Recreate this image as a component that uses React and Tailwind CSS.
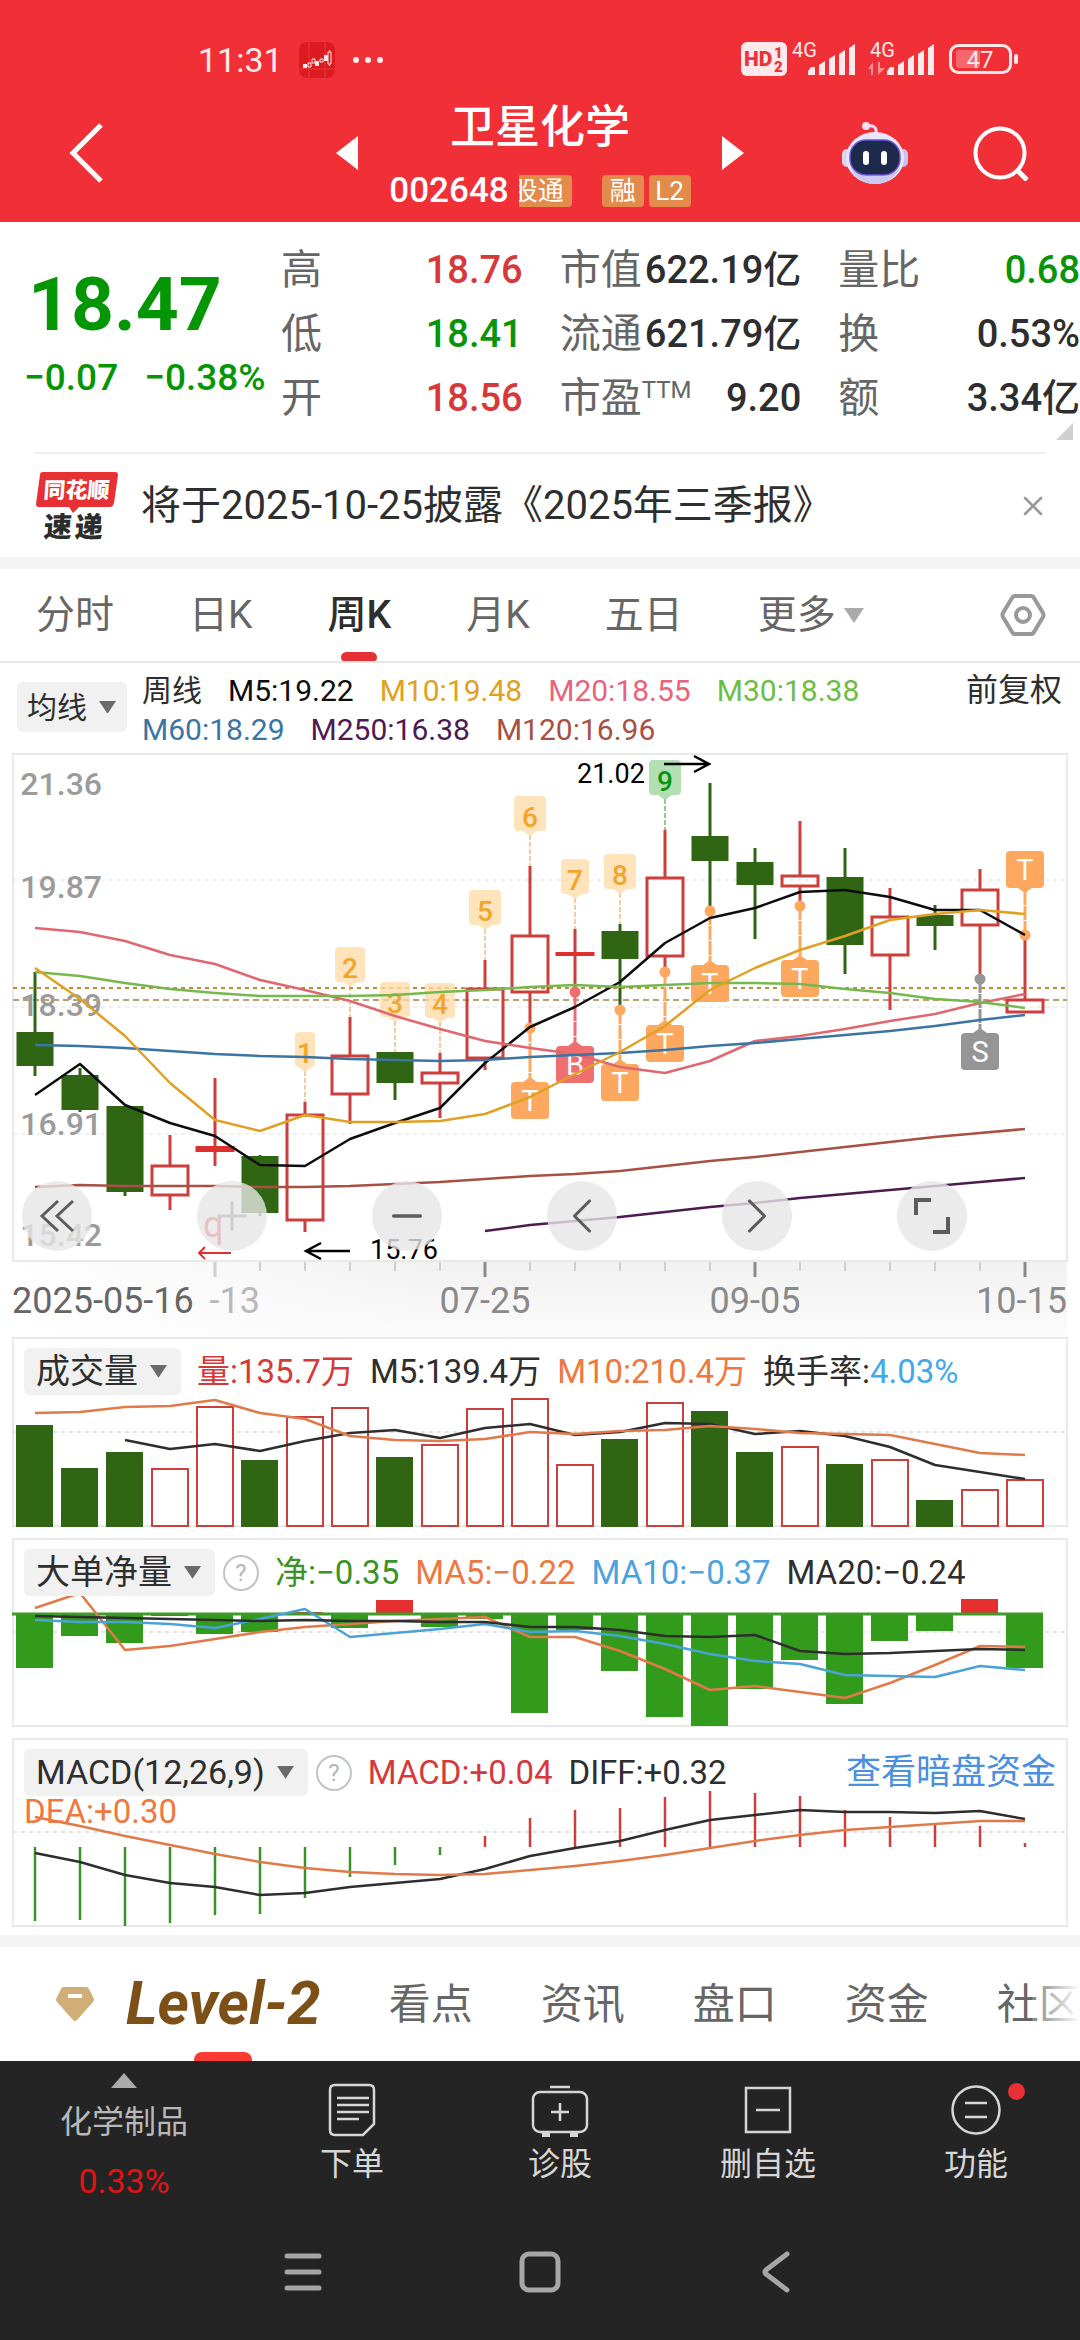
import { ChevronLeft, ChevronRight, ChevronsLeft, Minus, Plus, X } from "lucide-react";

const RED = "#cc3f3d";
const GREEN = "#306613";
const STEP = 45;
const FIRST = 35;
const xOf = (i) => FIRST + i * STEP;

// [kind, high, body top, body bottom, low]
const candles = [
    ["g", 232, 292, 326, 336],
    ["g", 328, 335, 370, 372],
    ["g", 366, 366, 452, 456],
    ["r", 395, 426, 455, 470],
    ["x", 338, 406, 412, 426],
    ["g", 415, 416, 473, 476],
    ["r", 362, 375, 480, 492],
    ["r", 277, 316, 354, 384],
    ["g", 312, 312, 343, 360],
    ["r", 313, 333, 343, 378],
    ["r", 220, 249, 318, 330],
    ["r", 126, 196, 252, 284],
    ["x", 189, 212, 216, 250],
    ["g", 184, 191, 219, 270],
    ["r", 90, 138, 216, 232],
    ["g", 43, 96, 121, 170],
    ["g", 108, 122, 145, 199],
    ["r", 81, 136, 146, 166],
    ["g", 108, 137, 205, 234],
    ["r", 148, 177, 215, 270],
    ["g", 165, 175, 186, 210],
    ["r", 129, 150, 185, 239],
    ["r", 196, 260, 272, 272],
];

const priceLines = [
    { color: "#0d0d0d", from: 0, ys: [355, 324, 365, 383, 396, 425, 426, 399, 383, 368, 323, 287, 267, 242, 203, 178, 168, 152, 150, 157, 170, 170, 195] },
    { color: "#e0666f", from: 0, ys: [188, 192, 201, 215, 224, 240, 250, 261, 276, 289, 301, 308, 314, 327, 333, 321, 301, 296, 289, 281, 274, 263, 254] },
    { color: "#76b84c", from: 0, ys: [232, 236, 243, 249, 253, 256, 256, 256, 255, 252, 250, 247, 245, 247, 245, 243, 243, 244, 249, 253, 259, 262, 268] },
    { color: "#3a75a3", from: 0, ys: [305, 306, 308, 311, 314, 316, 317, 319, 320, 321, 320, 317, 315, 313, 310, 306, 303, 299, 295, 291, 286, 280, 275] },
    { color: "#a85044", from: 0, ys: [447, 445, 446, 446, 446, 447, 447, 446, 444, 442, 439, 436, 434, 431, 426, 421, 417, 412, 407, 402, 397, 393, 389] },
    { color: "#4d1a52", from: 10, ys: [491, 485, 481, 477, 472, 467, 463, 458, 454, 450, 446, 442, 438] },
    { color: "#e0a021", from: 0, ys: [228, 259, 296, 343, 380, 391, 375, 382, 382, 381, 374, 357, 334, 312, 286, 250, 228, 210, 196, 180, 174, 170, 174] },
];

// nine-turn counters: [index, label, top, width]
const counters = [
    [6, "1", 292, 20],
    [7, "2", 207, 30],
    [8, "3", 242, 30],
    [9, "4", 243, 30],
    [10, "5", 150, 32],
    [11, "6", 56, 32],
    [12, "7", 119, 28],
    [13, "8", 114, 32],
    [14, "9", 20, 32],
];

// trade marks: [index, letter, box top, dot y, color]
const trades = [
    [11, "T", 342, 288, "#fea75f"],
    [12, "B", 306, 252, "#ef6e6e"],
    [13, "T", 324, 270, "#fea75f"],
    [14, "T", 285, 232, "#fea75f"],
    [15, "T", 225, 171, "#fea75f"],
    [17, "T", 220, 166, "#fea75f"],
    [21, "S", 293, 239, "#959595"],
    [22, "T", 111, 195, "#fea75f"],
];

const volumes = [
    ["g", 105], ["g", 148], ["g", 132], ["r", 149], ["r", 87], ["g", 140], ["r", 97], ["r", 88],
    ["g", 137], ["r", 125], ["r", 89], ["r", 79], ["r", 145], ["g", 119], ["r", 83], ["g", 91],
    ["g", 132], ["r", 127], ["g", 144], ["r", 140], ["g", 180], ["r", 170], ["r", 160],
];
const volumeLines = [
    { color: "#2e2e2e", from: 2, ys: [120, 129, 124, 131, 121, 113, 110, 118, 108, 104, 115, 112, 103, 104, 114, 111, 116, 127, 145, 152, 159] },
    { color: "#e07a4a", from: 0, ys: [93, 92, 87, 86, 80, 93, 99, 116, 120, 121, 119, 112, 114, 111, 110, 106, 109, 113, 114, 115, 124, 133, 135] },
];

const netBars = [138, 106, 113, 86, 104, 102, 82, 98, 70, 97, 89, 183, 100, 141, 187, 196, 159, 130, 174, 111, 101, 69, 138];
const netLines = [
    { color: "#e07a4a", from: 0, ys: [78, 63, 120, 116, 109, 102, 97, 94, 91, 89, 87, 107, 107, 121, 139, 160, 156, 162, 168, 153, 135, 116, 117] },
    { color: "#4aa3d6", from: 0, ys: [90, 92, 92, 94, 98, 89, 79, 107, 103, 99, 94, 102, 101, 106, 114, 124, 131, 134, 145, 146, 147, 136, 140] },
    { color: "#2e2e2e", from: 0, ys: [86, 87, 88, 89, 90, 91, 90, 91, 91, 92, 92, 97, 97, 100, 106, 107, 105, 121, 124, 123, 121, 119, 120] },
];

const macdBars = [191, 190, 196, 193, 185, 184, 168, 147, 135, 125, 106, 88, 80, 78, 67, 61, 63, 66, 80, 87, 95, 96, 113];
const macdLines = [
    { color: "#2e2e2e", from: 0, ys: [123, 132, 145, 153, 157, 165, 163, 157, 153, 149, 139, 126, 118, 111, 100, 90, 85, 80, 82, 82, 83, 81, 89] },
    { color: "#e07a4a", from: 0, ys: [87, 96, 106, 115, 124, 132, 138, 142, 144, 145, 144, 140, 136, 131, 125, 118, 111, 105, 100, 97, 94, 91, 91] },
];

const Lines = ({ lines, width = 2.5 }) =>
    lines.map((line) => (
        <polyline
            key={line.color}
            fill="none"
            stroke={line.color}
            strokeWidth={width}
            strokeLinejoin="round"
            points={line.ys.map((y, i) => `${xOf(i + line.from)},${y}`).join(" ")}
        />
    ));

const Candle = ({ i, kind, high, top, bottom, low }) => {
    const x = xOf(i);
    if (kind === "g")
        return (
            <g fill={GREEN}>
                <rect x={x - 1.5} y={high} width="3" height={low - high} />
                <rect x={x - 18.5} y={top} width="37" height={bottom - top} />
            </g>
        );
    if (kind === "x")
        return (
            <g fill={RED}>
                <rect x={x - 1.5} y={high} width="3" height={low - high} />
                <rect x={x - 19.5} y={top} width="39" height={bottom - top} fill="#df3030" />
            </g>
        );
    return (
        <g stroke={RED} strokeWidth="3" fill="none">
            <path d={`M${x} ${high}V${top}M${x} ${bottom}V${low}`} />
            <rect x={x - 18} y={top} width="36" height={bottom - top} />
        </g>
    );
};

const Counter = ({ i, label, top, width }) => {
    const x = xOf(i);
    const last = label === "9";
    const color = last ? "#0f930f" : "#f0a52c";
    return (
        <g>
            <path d={`M${x} ${top + 39}V${candles[i][1]}`} stroke={last ? "#2c8a2c" : "#d6a243"} strokeDasharray="5 2" />
            <g fill={last ? "#98d69a" : "#fdd9a4"} fillOpacity="0.75">
                <rect x={x - width / 2} y={top} width={width} height="35" rx="4" />
                <path d={`M${x - 7} ${top + 35}h14l-7 5z`} />
            </g>
            <text x={x} y={top + 31} textAnchor="middle" fontSize="28" fontWeight="500" fill={color}>{label}</text>
        </g>
    );
};

const Trade = ({ i, letter, top, dot, color }) => {
    const x = xOf(i);
    const above = top < dot;
    return (
        <g>
            <path d={`M${x} ${dot}V${above ? top + 40 : top - 4}`} stroke={color} strokeWidth="3" strokeDasharray="14 1" />
            <circle cx={x} cy={dot} r="5.5" fill={color} />
            <rect x={x - 19} y={top} width="38" height="37" rx="4" fill={color} />
            <path d={above ? `M${x - 7} ${top + 37}h14l-7 5z` : `M${x - 7} ${top}h14l-7-5z`} fill={color} />
            <text x={x} y={top + 29} textAnchor="middle" fontSize="29" fill="#fff">{letter}</text>
        </g>
    );
};

const PriceChart = () => (
    <svg viewBox="0 13 1080 584" className="block w-full">
        <defs>
            <linearGradient id="fadeRight" x1="0" x2="1" y1="0" y2="0">
                <stop offset="0" stopColor="#fff" />
                <stop offset="0.4" stopColor="#fff" stopOpacity="0" />
            </linearGradient>
            <linearGradient id="fadeDown" x1="0" x2="0" y1="0" y2="1">
                <stop offset="0" stopColor="#f1f1f1" />
                <stop offset="1" stopColor="#fbfbfb" />
            </linearGradient>
        </defs>
        <rect x="13" y="521" width="1054" height="76" fill="url(#fadeDown)" />
        <rect x="13" y="521" width="1054" height="76" fill="url(#fadeRight)" />
        <rect x="13" y="14" width="1054" height="507" fill="none" stroke="#e9e9e9" strokeWidth="2" />
        {[140, 267, 394].map((y) => (
            <path key={y} d={`M13 ${y}H1067`} stroke="#e2e2e2" strokeDasharray="4 4" />
        ))}
        <g fontSize="32" fontWeight="500" fill="#9b9b9b" textAnchor="end">
            <text x="102" y="55">21.36</text>
            <text x="102" y="158">19.87</text>
            <text x="102" y="276">18.39</text>
            <text x="102" y="395">16.91</text>
            <text x="102" y="506">15.42</text>
        </g>
        <path d="M13 248H1067" stroke="#c08c3c" strokeWidth="2" strokeDasharray="4 4" />
        <path d="M13 260H1067" stroke="#b8a070" strokeWidth="2" strokeDasharray="6 4" />
        {candles.map(([kind, high, top, bottom, low], i) => (
            <Candle key={i} i={i} kind={kind} high={high} top={top} bottom={bottom} low={low} />
        ))}
        {counters.map(([i, label, top, width]) => (
            <Counter key={i} i={i} label={label} top={top} width={width} />
        ))}
        {trades.map(([i, letter, top, dot, color]) => (
            <Trade key={i} i={i} letter={letter} top={top} dot={dot} color={color} />
        ))}
        <Lines lines={priceLines} />
        <g stroke="#000" strokeWidth="2.5" fill="none">
            <path d="M664 24H709M694 16l15 8-15 8" />
            <path d="M350 511H306M321 503l-15 8 15 8" />
        </g>
        <text x="577" y="43" fontSize="27" fill="#000">21.02</text>
        <text x="370" y="519" fontSize="27" fill="#000">15.76</text>
        <path d="M231 513H199M205 507l-6 6 6 6" stroke="#df3030" strokeWidth="2" fill="none" />
        <text x="203" y="497" fontSize="36" fill="#df3030">q</text>
        {Array.from({ length: 19 }, (_, k) => k + 4).map((i) => {
            const major = i % 6 === 4;
            return (
                <path
                    key={i}
                    d={`M${xOf(i)} 522V${major ? 537 : 531}`}
                    stroke={major && i > 4 ? "#8a8a8a" : "#cfcfcf"}
                    strokeWidth={major ? 3 : 2}
                />
            );
        })}
        <g fontSize="36" fill="#8a8a8a">
            <text x="260" y="573" textAnchor="end" fill="#b8b8b8">-13</text>
            <text x="12" y="573" fill="#666">2025-05-16</text>
            <text x="485" y="573" textAnchor="middle">07-25</text>
            <text x="755" y="573" textAnchor="middle">09-05</text>
            <text x="1067" y="573" textAnchor="end">10-15</text>
        </g>
    </svg>
);

const Frame = ({ viewBox, bottom, grid, top, children }) => (
    <svg viewBox={viewBox} className="block w-full">
        <rect x="13" y={top} width="1054" height={bottom - top} fill="none" stroke="#e9e9e9" strokeWidth="2" />
        <path d={`M13 ${grid}H1067`} stroke="#e4e4e4" strokeWidth="2" strokeDasharray="4 4" />
        {children}
    </svg>
);

const VolumeChart = () => (
    <Frame viewBox="0 17 1080 201" top={18} bottom={206} grid={112}>
        {volumes.map(([kind, y], i) =>
            kind === "g" ? (
                <rect key={i} x={xOf(i) - 19} y={y} width="37" height={207 - y} fill={GREEN} />
            ) : (
                <rect key={i} x={xOf(i) - 18} y={y} width="36" height={206 - y} fill="#fff" stroke={RED} strokeWidth="2" />
            )
        )}
        <Lines lines={volumeLines} />
    </Frame>
);

const NetChart = () => (
    <Frame viewBox="0 8 1080 200" top={9} bottom={196} grid={102}>
        {netBars.map((y, i) => (
            <rect
                key={i}
                x={xOf(i) - 19}
                y={Math.min(y, 84)}
                width="37"
                height={Math.abs(y - 84)}
                fill={y < 84 ? "#e63030" : "#329b1c"}
            />
        ))}
        <path d="M12 84H1043" stroke="#3d9c28" strokeWidth="3" />
        <Lines lines={netLines} />
    </Frame>
);

const MacdChart = () => (
    <Frame viewBox="0 8 1080 197" top={9} bottom={196} grid={102}>
        {macdBars.map((y, i) => (
            <path key={i} d={`M${xOf(i)} 117V${y}`} stroke={y > 117 && i < 11 ? "#3b9328" : i < 10 ? "#3b9328" : "#cc3f3d"} strokeWidth="2.5" />
        ))}
        <Lines lines={macdLines} />
    </Frame>
);

const Down = ({ className }) => (
    <svg viewBox="0 0 16 12" className={className} fill="currentColor">
        <path d="M0 0h16L8 12z" />
    </svg>
);

const Pill = ({ children }) => (
    <button className="flex h-[47px] shrink-0 items-center gap-3 rounded-md bg-[#f1f1f1] pr-3.5 pl-3 text-[34px] text-[#2e2e2e]">
        {children}
        <Down className="w-[17px] text-[#6a6a6a]" />
    </button>
);

const Help = () => (
    <button aria-label="说明" className="flex size-[36px] shrink-0 items-center justify-center rounded-full border-2 border-[#c3c3c3] text-2xl text-[#b5b5b5]">
        ?
    </button>
);

const StatusBar = () => (
    <div className="flex h-12 items-center justify-between pr-[58px] pl-[198px] text-[#ffe9ea]">
        <div className="flex items-center">
            <span className="text-[34px]">11:31</span>
            <svg viewBox="0 0 36 36" className="ml-[16px] size-9">
                <rect width="36" height="36" rx="8" fill="#dd1a1f" />
                <path d="M10 0v36M26 0v36M0 27h36" stroke="#ec4a4c" strokeWidth="0.6" />
                <g fill="#ffe9ea">
                    <path d="M4 22h4v4H4zM16 19h4v5h-4zM25 13h4v6h-4z" />
                </g>
                <g fill="none" stroke="#ffe9ea" strokeWidth="1">
                    <path d="M9 21h3v4H9zM13 17h3v4h-3zM21 17h3v3h-3zM29 10h3v12h-3zM30.500 8v2M30.500 22v2" />
                </g>
            </svg>
            <svg viewBox="0 0 32 8" className="ml-[17px] w-8" fill="currentColor">
                <circle cx="4" cy="4" r="3" />
                <circle cx="16" cy="4" r="3" />
                <circle cx="28" cy="4" r="3" />
            </svg>
        </div>
        <svg viewBox="741 36 281 48" className="w-[281px]" fill="currentColor">
            <rect x="741" y="42" width="46" height="34" rx="6" />
            <text x="744" y="66" fontSize="21" fontWeight="900" fill="#e8343c">HD</text>
            <text x="774" y="58" fontSize="15" fontWeight="900" fill="#e8343c">1</text>
            <text x="774" y="72" fontSize="15" fontWeight="900" fill="#e8343c">2</text>
            <text x="792" y="57" fontSize="20">4G</text>
            <text x="870" y="57" fontSize="20">4G</text>
            {[808, 887].map((x) => (
                <path
                    key={x}
                    d={`M${x} 75v-4l3-4h4v8zM${x + 11} 75v-10l6-4v14zM${x + 21} 75v-16l6-4v20zM${x + 31} 75v-21l6-4v25zM${x + 41} 75v-27l6-4v31z`}
                />
            ))}
            <path d="M868 69l5-7v13h-2v-6zM878 75V62h2v6h5z" opacity="0.5" />
            <rect x="950.500" y="45.500" width="60" height="27" rx="8" fill="none" stroke="currentColor" strokeWidth="3" />
            <rect x="956" y="50" width="24" height="18" rx="3" opacity="0.3" />
            <text x="980" y="68" fontSize="24" textAnchor="middle">47</text>
            <rect x="1014" y="54" width="4" height="10" rx="2" />
        </svg>
    </div>
);

const Robot = () => (
    <svg viewBox="0 0 66 62" className="w-[66px]">
        <path d="M34 11c1-6-3-8-9-7" fill="none" stroke="#eadcf5" strokeWidth="3" />
        <circle cx="24" cy="4" r="4" fill="#f3dff0" />
        <rect x="0" y="27" width="10" height="18" rx="5" fill="#d9d3f4" />
        <rect x="56" y="27" width="10" height="18" rx="5" fill="#c7c3ee" />
        <ellipse cx="33" cy="36" rx="29" ry="26" fill="#ebe7fb" />
        <path d="M8 46c5 10 14 16 25 16s20-6 25-16c-7 7-14 8-25 8s-18-1-25-8z" fill="#cdc8f2" />
        <rect x="8" y="18" width="50" height="35" rx="16" fill="#1d2a4c" stroke="#6c55d8" strokeWidth="1.500" />
        <rect x="21" y="29" width="6" height="14" rx="3" fill="#fff" />
        <rect x="39" y="29" width="6" height="14" rx="3" fill="#fff" />
    </svg>
);

const Header = () => (
    <header className="bg-[#f12f37] pt-9 text-white">
        <StatusBar />
        <div className="grid h-[138px] grid-cols-[1fr_408px_1fr] items-center">
            <div className="pl-[68px]">
                <button aria-label="返回" className="block">
                    <svg viewBox="0 0 36 60" className="h-[60px]" fill="none" stroke="currentColor" strokeWidth="5">
                        <path d="M33 2L5 30l28 28" />
                    </svg>
                </button>
            </div>
            <div className="flex items-center justify-between">
                <button aria-label="上一只">
                    <svg viewBox="0 0 22 34" className="w-[22px]" fill="currentColor"><path d="M22 0v34L0 17z" /></svg>
                </button>
                <div className="flex flex-col items-center pt-3">
                    <h1 className="text-[45px] leading-[64px] font-medium">卫星化学</h1>
                    <div className="flex items-center leading-[62px]">
                        <span className="text-[35px] font-medium">002648</span>
                        <span className="ml-[10px] flex h-8 w-[53px] items-center justify-end overflow-hidden rounded-r-sm bg-[#e38b4a] pr-2 text-[26px] whitespace-nowrap">股通</span>
                        <span className="ml-[30px] flex h-8 w-[42px] items-center justify-center rounded-sm bg-[#e38b4a] text-[26px]">融</span>
                        <span className="ml-[5px] flex h-8 w-[42px] items-center justify-center rounded-sm bg-[#e38b4a] text-[26px]">L2</span>
                    </div>
                </div>
                <button aria-label="下一只">
                    <svg viewBox="0 0 22 34" className="w-[22px]" fill="currentColor"><path d="M0 0v34l22-17z" /></svg>
                </button>
            </div>
            <div className="flex items-center justify-end gap-[65px] pr-[51px]">
                <button aria-label="智能助手"><Robot /></button>
                <button aria-label="搜索">
                    <svg viewBox="0 0 56 56" className="w-[56px]" fill="none" stroke="currentColor" strokeWidth="4">
                        <circle cx="27" cy="28" r="24.500" />
                        <path d="M44 45l10 10" strokeWidth="5" />
                    </svg>
                </button>
            </div>
        </div>
    </header>
);

const Quote = ({ rows }) => (
    <dl className="text-[38px] leading-[64px] whitespace-nowrap">
        {rows.map(([label, value, color, sup]) => (
            <div key={label} className="flex items-center justify-between">
                <dt className="flex text-[41px] text-[#666]">
                    {label}
                    {sup && <sup className="top-[-8px] text-[24px] leading-[64px]">{sup}</sup>}
                </dt>
                <dd className={`font-medium ${color}`}>{value}</dd>
            </div>
        ))}
    </dl>
);

const up = "text-[#d63939]";
const down = "text-[#089408]";
const flat = "text-[#2e2e2e]";

const Summary = () => (
    <section className="relative grid grid-cols-[220px_1fr_1fr_1fr] gap-x-[37px] pt-4 pb-[22px] pl-6">
        <div className="pt-[17px] whitespace-nowrap text-[#059605]">
            <p className="pl-1 text-[75px] leading-[98px] font-bold">18.47</p>
            <p className="flex gap-[26px] text-[37px] leading-[50px] font-medium">
                <span>−0.07</span>
                <span>−0.38%</span>
            </p>
        </div>
        <Quote rows={[["高", "18.76", up], ["低", "18.41", down], ["开", "18.56", up]]} />
        <Quote rows={[["市值", "622.19亿", flat], ["流通", "621.79亿", flat], ["市盈", "9.20", flat, "TTM"]]} />
        <Quote rows={[["量比", "0.68", down], ["换", "0.53%", flat], ["额", "3.34亿", flat]]} />
        <svg viewBox="0 0 17 17" className="absolute right-[7px] bottom-3 w-[17px]" fill="#cfcfcf"><path d="M17 0v17H0z" /></svg>
    </section>
);

const Notice = () => (
    <section className="mx-[35px] flex h-[105px] items-center border-t-2 border-[#eee]">
        <svg viewBox="0 0 84 72" className="w-[84px] shrink-0">
            <path d="M8 2h72q3 0 3 3l-4 28q-1 4-4 4H44l-6 6-4-6H4q-3 0-3-3L5 5q0-3 3-3z" fill="#e63034" />
            <text x="10" y="28" fontSize="22" fontWeight="900" fill="#fff" transform="skewX(-4)">同花顺</text>
            <text x="13" y="67" fontSize="28" fontWeight="900" fill="#2c2c2c" transform="skewX(-4)">速</text>
            <text x="44" y="67" fontSize="28" fontWeight="900" fill="#2c2c2c" transform="skewX(-4)">递</text>
        </svg>
        <a href="#notice" className="ml-[22px] flex-1 text-[40px] whitespace-nowrap text-[#2e2e2e]">将于2025-10-25披露《2025年三季报》</a>
        <button aria-label="关闭" className="text-[#999]"><X size={32} strokeWidth={2} className="-mr-1" /></button>
    </section>
);

const periods = ["分时", "日K", "周K", "月K", "五日"];

const PeriodTabs = () => (
    <nav className="flex h-[94px] items-stretch gap-[75px] border-b-2 border-[#e6e6e6] pr-[34px] pl-9 text-[39px] text-[#666]">
        {periods.map((name) => (
            <button key={name} className={`relative whitespace-nowrap ${name === "周K" ? "font-medium text-[#2e2e2e]" : ""}`}>
                {name}
                {name === "周K" && <span className="absolute bottom-0 left-1/2 h-[9px] w-9 -translate-x-1/2 rounded-t-md rounded-b-sm bg-[#e63034]" />}
            </button>
        ))}
        <button className="flex items-center gap-2 whitespace-nowrap">
            更多
            <Down className="w-5 text-[#aaa]" />
        </button>
        <button aria-label="设置" className="ml-auto text-[#999]">
            <svg viewBox="0 0 46 46" className="w-[46px]" fill="none" stroke="currentColor" strokeWidth="4">
                <path d="M15 4h16q2 0 3 2l9 15q1 2 0 4l-9 15q-1 2-3 2H15q-2 0-3-2L3 25q-1-2 0-4l9-15q1-2 3-2z" />
                <circle cx="23" cy="23" r="7" />
            </svg>
        </button>
    </nav>
);

const AverageBar = () => (
    <div className="flex h-[90px] items-start pr-[18px] pl-[17px] text-[30px] leading-[39px] whitespace-nowrap">
        <button className="mt-[19px] flex h-[50px] w-[110px] items-center gap-3 rounded-md bg-[#f1f1f1] pl-[10px] text-[#2e2e2e]">
            均线
            <Down className="w-[17px] text-[#6a6a6a]" />
        </button>
        <div className="mt-2 ml-[15px] flex-1">
            <p className="flex gap-[26px]">
                <span className="text-[#2e2e2e]">周线</span>
                <span className="text-[#0d0d0d]">M5:19.22</span>
                <span className="text-[#e0a021]">M10:19.48</span>
                <span className="text-[#e8647a]">M20:18.55</span>
                <span className="text-[#6cbd45]">M30:18.38</span>
            </p>
            <p className="flex gap-[26px]">
                <span className="text-[#3a75a3]">M60:18.29</span>
                <span className="text-[#4d1a52]">M250:16.38</span>
                <span className="text-[#a85044]">M120:16.96</span>
            </p>
        </div>
        <button className="mt-2 text-[32px] text-[#2e2e2e]">前复权</button>
    </div>
);

const tool = "flex size-[70px] items-center justify-center rounded-full bg-[#e6e6e6]/80 text-[#5c5c5c]";

const ChartTools = () => (
    <div className="absolute top-[428px] right-[113px] left-[22px] flex justify-between">
        <button aria-label="最早" className={tool}>
            <svg viewBox="0 0 36 34" className="w-9" fill="none" stroke="currentColor" strokeWidth="3">
                <path d="M19 2L3 17l16 15M34 2L18 17l16 15" />
            </svg>
        </button>
        <button aria-label="放大" className={tool}><Plus size={46} strokeWidth={1.5} color="#cfcfcf" /></button>
        <button aria-label="缩小" className={tool}><Minus size={46} strokeWidth={1.75} /></button>
        <button aria-label="左移" className={tool}><ChevronLeft size={60} strokeWidth={1.25} /></button>
        <button aria-label="右移" className={tool}><ChevronRight size={60} strokeWidth={1.25} /></button>
        <button aria-label="全屏" className={tool}>
            <svg viewBox="0 0 36 36" className="w-9" fill="none" stroke="currentColor" strokeWidth="4">
                <path d="M2 17V2h15M34 19v15H19" />
            </svg>
        </button>
    </div>
);

const Legend = ({ children }) => (
    <div className="absolute top-[11px] right-[24px] left-[24px] flex items-center gap-x-4 text-[33px] leading-[47px] whitespace-nowrap">
        {children}
    </div>
);

const Charts = () => (
    <section>
        <div className="relative">
            <PriceChart />
            <ChartTools />
        </div>
        <div className="relative">
            <VolumeChart />
            <Legend>
                <Pill>成交量</Pill>
                <span className="text-[#d63939]">量:135.7万</span>
                <span className="text-[#2e2e2e]">M5:139.4万</span>
                <span className="text-[#ee7840]">M10:210.4万</span>
                <span className="text-[#2e2e2e]">换手率:<span className="text-[#43a8e8]">4.03%</span></span>
            </Legend>
        </div>
        <div className="relative">
            <NetChart />
            <Legend>
                <span className="flex items-center gap-2"><Pill>大单净量</Pill><Help /></span>
                <span className="text-[#3b9328]">净:−0.35</span>
                <span className="text-[#ee7840]">MA5:−0.22</span>
                <span className="text-[#4aa3e0]">MA10:−0.37</span>
                <span className="text-[#2e2e2e]">MA20:−0.24</span>
            </Legend>
        </div>
        <div className="relative">
            <MacdChart />
            <Legend>
                <span className="flex items-center gap-2"><Pill>MACD(12,26,9)</Pill><Help /></span>
                <span className="text-[#d63939]">MACD:+0.04</span>
                <span className="text-[#2e2e2e]">DIFF:+0.32</span>
                <a href="#dark" className="ml-auto text-[35px] text-[#4a8fe0]">查看暗盘资金</a>
            </Legend>
            <p className="absolute top-[58px] left-[24px] text-[33px] leading-[32px] text-[#ee7840]">DEA:+0.30</p>
        </div>
    </section>
);

const SectionTabs = () => (
    <nav className="relative flex h-[114px] items-center gap-[68px] overflow-hidden pl-14 text-[42px] whitespace-nowrap text-[#666]">
        <button className="relative flex h-full items-center">
            <svg viewBox="0 0 38 36" className="w-[38px]">
                <path d="M8 1h22q2 0 3 2l5 10q0 2-1 3L21 34q-2 2-4 0L1 16q-1-1-1-3L5 3q1-2 3-2z" fill="#cfae78" />
                <path d="M12 10h14" stroke="#fff" strokeWidth="4" />
            </svg>
            <span className="ml-8 text-[60px] font-bold text-[#7c5016] italic">Level-2</span>
            <span className="absolute bottom-0 left-[138px] h-[9px] w-[58px] rounded-t-lg bg-[#f93b32]" />
        </button>
        <button>看点</button>
        <button>资讯</button>
        <button>盘口</button>
        <button>资金</button>
        <button>社区</button>
        <span className="absolute inset-y-0 right-0 w-12 bg-linear-to-l from-white to-white/20" />
    </nav>
);

const actions = [
    {
        label: "下单",
        icon: (
            <>
                <path d="M7 2h34q5 0 5 5v34L35 52H7q-5 0-5-5V7q0-5 5-5z" />
                <path d="M9 15h32M9 22h32M9 29h32M9 36h22" />
            </>
        ),
        box: "0 0 48 54",
    },
    {
        label: "诊股",
        icon: (
            <>
                <rect x="2" y="9" width="54" height="40" rx="7" />
                <path d="M19 4h20M29 20v18M20 29h18" />
                <path d="M11 52h8M39 52h8" strokeWidth="4" />
            </>
        ),
        box: "0 0 58 54",
    },
    {
        label: "删自选",
        icon: (
            <>
                <rect x="2" y="5" width="44" height="44" />
                <path d="M12 27h24" />
            </>
        ),
        box: "0 0 48 54",
    },
    {
        label: "功能",
        icon: (
            <>
                <circle cx="25" cy="27" r="23.500" />
                <path d="M14 20h22M14 34h22" />
            </>
        ),
        box: "0 0 50 54",
        dot: true,
    },
];

const BottomBar = () => (
    <footer className="bg-[#242424] text-[#d6d6d6]">
        <div className="grid h-[150px] grid-cols-[248fr_208fr_208fr_208fr_208fr]">
            <button className="flex flex-col items-center pt-3">
                <svg viewBox="0 0 26 15" className="w-[26px]" fill="#aaa"><path d="M13 0l13 15H0z" /></svg>
                <span className="mt-2.5 text-[32px] leading-[48px] text-[#b8b8b8]">化学制品</span>
                <span className="mt-3 text-[34px] leading-[46px] text-[#e01414]">0.33%</span>
            </button>
            {actions.map(({ label, icon, box, dot }) => (
                <button key={label} className="flex flex-col items-center pt-[22px]">
                    <span className="relative">
                        <svg viewBox={box} className="h-[54px]" fill="none" stroke="currentColor" strokeWidth="2.500">{icon}</svg>
                        {dot && <span className="absolute top-0 -right-6 size-[17px] rounded-full bg-[#e63034]" />}
                    </span>
                    <span className="mt-1 text-[32px] leading-[46px]">{label}</span>
                </button>
            ))}
        </div>
        <div className="flex h-[129px] items-center justify-center gap-[196px] pb-[8px] text-[#a6a6a6]">
            <button aria-label="最近任务">
                <svg viewBox="0 0 40 42" className="w-10" stroke="currentColor" strokeWidth="5" strokeLinecap="round">
                    <path d="M4 5h32M4 21h32M4 37h32" />
                </svg>
            </button>
            <button aria-label="主屏幕">
                <svg viewBox="0 0 42 42" className="w-[42px]" fill="none" stroke="currentColor" strokeWidth="5">
                    <rect x="3" y="3" width="36" height="36" rx="7" />
                </svg>
            </button>
            <button aria-label="后退">
                <svg viewBox="0 0 40 42" className="w-10" fill="none" stroke="currentColor" strokeWidth="5" strokeLinecap="round" strokeLinejoin="round">
                    <path d="M30 3L9 19q-2 2 0 4l21 16" />
                </svg>
            </button>
        </div>
    </footer>
);

const App = () => (
    <main className="min-h-screen bg-white font-['Roboto','Noto_Sans_CJK_SC',sans-serif]">
        <Header />
        <Summary />
        <Notice />
        <div className="h-3 bg-[#f4f4f4]" />
        <PeriodTabs />
        <AverageBar />
        <Charts />
        <div className="h-3 bg-[#f4f4f4]" />
        <SectionTabs />
        <BottomBar />
    </main>
);

export default App;
